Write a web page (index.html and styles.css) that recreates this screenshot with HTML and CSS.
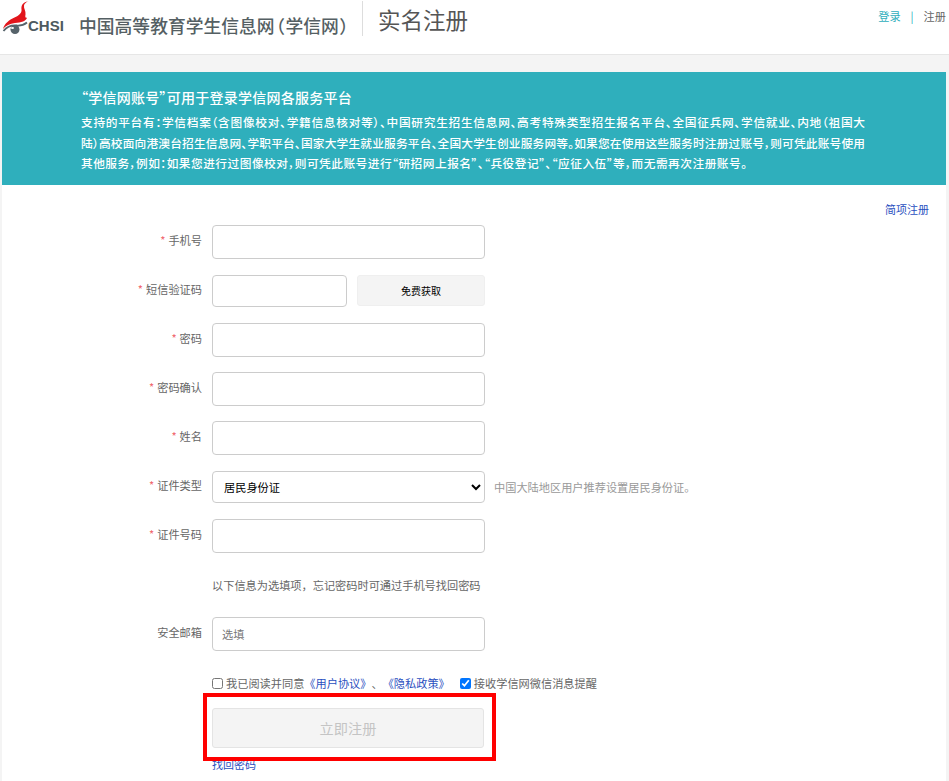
FILE: index.html
```html
<!DOCTYPE html>
<html lang="zh-CN">
<head>
<meta charset="utf-8">
<title>实名注册</title>
<link rel="stylesheet" href="styles.css">
</head>
<body>
<header class="topbar">
  <div class="brand">
    <div class="logo">
      <svg class="logo-mark" width="30" height="35" viewBox="0 0 30 35" aria-hidden="true">
        <path fill="#e2151b" d="M27.5 1C21 2.500 20 6 20.500 9.500 21 13 18 15.500 13.500 17.500 8 20 3.500 23.500 2 29 4.500 25.500 9 23.500 14 23 20 22.500 25.500 21 26 17.500 24.500 18.500 24 17 24.500 14.500 25 11 22.500 8.500 23 5.500 23.300 3.500 25.500 2 27.500 1Z"/>
        <path fill="none" stroke="#56636a" stroke-width="1.800" d="M2.500 31C6 26.500 11 25 16 25.500 20 25.800 23.500 24.500 26 22.500"/>
        <circle cx="14" cy="29.500" r="4.500" fill="#56636a"/>
        <ellipse cx="11.500" cy="28" rx="1.500" ry="1" fill="#fff"/>
      </svg>
      <span class="logo-text">CHSI</span>
    </div>
    <div class="site-name">中国高等教育学生信息网<span class="paren">（</span>学信网<span class="paren">）</span></div>
    <h1 class="page-title">实名注册</h1>
  </div>
  <nav class="top-links">
    <a class="link-login" href="#">登录</a>
    <span class="top-sep">|</span>
    <a class="link-register" href="#">注册</a>
  </nav>
</header>

<main class="page">
  <section class="banner">
    <h2 class="banner-title">“学信网账号”可用于登录学信网各服务平台</h2>
    <p class="banner-text">
      <span class="banner-line">支持的平台有：学信档案（含图像校对、学籍信息核对等）、中国研究生招生信息网、高考特殊类型招生报名平台、全国征兵网、学信就业、内地（祖国大</span>
      <span class="banner-line">陆）高校面向港澳台招生信息网、学职平台、国家大学生就业服务平台、全国大学生创业服务网等。如果您在使用这些服务时注册过账号，则可凭此账号使用</span>
      <span class="banner-line banner-line-last">其他服务，例如：如果您进行过图像校对，则可凭此账号进行“研招网上报名”、“兵役登记”、“应征入伍”等，而无需再次注册账号。</span>
    </p>
  </section>

  <div class="simple-row"><a class="link-blue" href="#">简项注册</a></div>

  <form class="form">
    <div class="row">
      <label class="label"><span class="star">*</span> 手机号</label>
      <input class="input" type="text">
    </div>
    <div class="row">
      <label class="label"><span class="star">*</span> 短信验证码</label>
      <input class="input input-short" type="text">
      <button class="sms-btn" type="button">免费获取</button>
    </div>
    <div class="row row-15">
      <label class="label"><span class="star">*</span> 密码</label>
      <input class="input" type="password">
    </div>
    <div class="row row-15">
      <label class="label"><span class="star">*</span> 密码确认</label>
      <input class="input" type="password">
    </div>
    <div class="row">
      <label class="label"><span class="star">*</span> 姓名</label>
      <input class="input" type="text">
    </div>
    <div class="row">
      <label class="label"><span class="star">*</span> 证件类型</label>
      <select class="input select"><option>居民身份证</option></select>
      <span class="hint">中国大陆地区用户推荐设置居民身份证。</span>
    </div>
    <div class="row row-note">
      <label class="label"><span class="star">*</span> 证件号码</label>
      <input class="input" type="text">
    </div>
    <p class="note">以下信息为选填项，忘记密码时可通过手机号找回密码</p>
    <div class="row row-mail">
      <label class="label">安全邮箱</label>
      <input class="input" type="text" placeholder="选填">
    </div>
    <div class="agree">
      <label class="check"><input type="checkbox"> 我已阅读并同意</label>
      <a class="link-blue" href="#">《用户协议》</a><span class="agree-sep">、</span><a class="link-blue" href="#">《隐私政策》</a>
      <label class="check check-wechat"><input type="checkbox" checked> 接收学信网微信消息提醒</label>
    </div>
    <button class="submit" type="button" disabled>立即注册</button>
    <a class="link-blue forgot" href="#">找回密码</a>
    <div class="highlight"></div>
  </form>
</main>
</body>
</html>
```

FILE: styles.css
```css
* { box-sizing: border-box; }
html, body { margin: 0; padding: 0; height: 781px; overflow: hidden; }
body {
  background: #f4f4f4;
  color: #666;
  font-family: "Noto Sans CJK SC", "Liberation Sans", sans-serif;
  font-size: 12px;
}
a { text-decoration: none; }

.topbar {
  height: 55px;
  background: #fff;
  border-bottom: 1px solid #e6e6e6;
  display: flex;
  justify-content: space-between;
  align-items: flex-start;
}
.brand { display: flex; align-items: flex-start; }
.logo { width: 79px; height: 36px; display: flex; align-items: flex-start; padding-left: 1px; }
.logo-mark { flex: none; }
.logo-text {
  margin: 16px 0 0 -3px;
  font-family: "Liberation Sans", sans-serif;
  font-weight: 700;
  font-size: 15px;
  line-height: 20px;
  color: #4d5a60;
}
.site-name {
  width: 284px;
  height: 35px;
  border-right: 1px solid #ddd;
  margin-top: 1px;
  padding-top: 12px;
  font-size: 17.8px;
  line-height: 24px;
  font-weight: 500;
  color: #555f63;
  white-space: nowrap;
  font-feature-settings: "palt";
}
.paren { margin: 0 1px; }
.page-title {
  margin: 3px 0 0 15px;
  font-size: 22.5px;
  line-height: 32px;
  font-weight: 400;
  color: #555;
}
.top-links {
  display: flex;
  margin: 8px 3px 0 0;
  line-height: 16px;
  font-size: 11.2px;
}
.link-login { color: #2eaebc; }
.top-sep { color: #2eaebc; margin: 0 10px; }
.link-register { color: #666; }

.page {
  margin: 17px 3px 0 2px;
  background: #fff;
  height: 709px;
  position: relative;
}
.banner {
  height: 113px;
  background: #2fafbc;
  color: #fff;
  padding: 15px 0 0 79px;
}
.banner-title {
  margin: 0;
  font-size: 14px;
  line-height: 20px;
  font-weight: 500;
  font-feature-settings: "palt";
  letter-spacing: 0.25px;
}
.banner-text {
  margin: 5px 0 0;
  font-size: 11.7px;
  line-height: 20.5px;
  font-weight: 500;
  font-feature-settings: "palt";
}
.banner-line {
  display: block;
  width: 784px;
  white-space: normal;
  text-align: justify;
  text-align-last: justify;
}
.banner-line-last { width: 666px; }

.simple-row {
  display: flex;
  justify-content: flex-end;
  padding: 16px 17px 0 0;
  height: 40px;
  line-height: 16px;
  font-size: 11px;
}
.link-blue { color: #2a4fc0; }

.form { position: relative; padding-left: 210px; }
.form .row {
  display: flex;
  align-items: center;
  margin-bottom: 16px;
  position: relative;
}
.form .row-15 { margin-bottom: 15px; }
.form .row-note { margin-bottom: 24px; }
.form .row-mail { margin-bottom: 24px; }

.label {
  position: absolute;
  right: calc(100% + 10px);
  white-space: nowrap;
  font-size: 11.2px;
  color: #666;
  line-height: 16px;
  top: 50%;
  transform: translateY(-62%);
}
.star { color: #f0686f; margin-right: 0.5px; }

.input {
  display: block;
  width: 273px;
  height: 34px;
  border: 1px solid #ccc;
  border-radius: 4px;
  background: #fff;
  padding: 0 9px;
  font: inherit;
  font-size: 11.2px;
  color: #000;
  outline: none;
}
.input::placeholder { color: #777; opacity: 1; }
.input-short { width: 135px; height: 32px; }
.select { height: 32px; padding-left: 7px; }
.sms-btn {
  width: 128px;
  height: 31px;
  margin-left: 10px;
  align-self: flex-start;
  border: 1px solid #efefef;
  border-radius: 3px;
  background: #f4f4f4;
  color: #000;
  font: inherit;
  font-size: 10px;
  padding: 0;
}
.hint { margin-left: 9px; font-size: 11.2px; color: #999; white-space: nowrap; }
.note { margin: 0 0 24px; font-size: 11.2px; line-height: 16px; color: #666; }

.agree {
  display: flex;
  align-items: center;
  height: 16px;
  font-size: 11.2px;
  line-height: 16px;
  color: #666;
  white-space: nowrap;
}
.check { display: flex; align-items: center; }
.check input { margin: 0 3px 0 0; width: 11px; height: 11px; }
.check-wechat { margin-left: 10px; }

.submit {
  display: block;
  width: 272px;
  height: 40px;
  margin-top: 17px;
  border: 1px solid #e4e4e4;
  border-radius: 3px;
  background: #f4f4f4;
  color: #c4c4c4;
  font: inherit;
  font-size: 14.2px;
  padding: 0;
}
.forgot {
  display: block;
  margin-top: 8px;
  font-size: 11px;
  line-height: 16px;
}
.highlight {
  position: absolute;
  left: 201px;
  top: 468px;
  width: 293px;
  height: 68px;
  border: 4px solid #f00;
  pointer-events: none;
}
```
